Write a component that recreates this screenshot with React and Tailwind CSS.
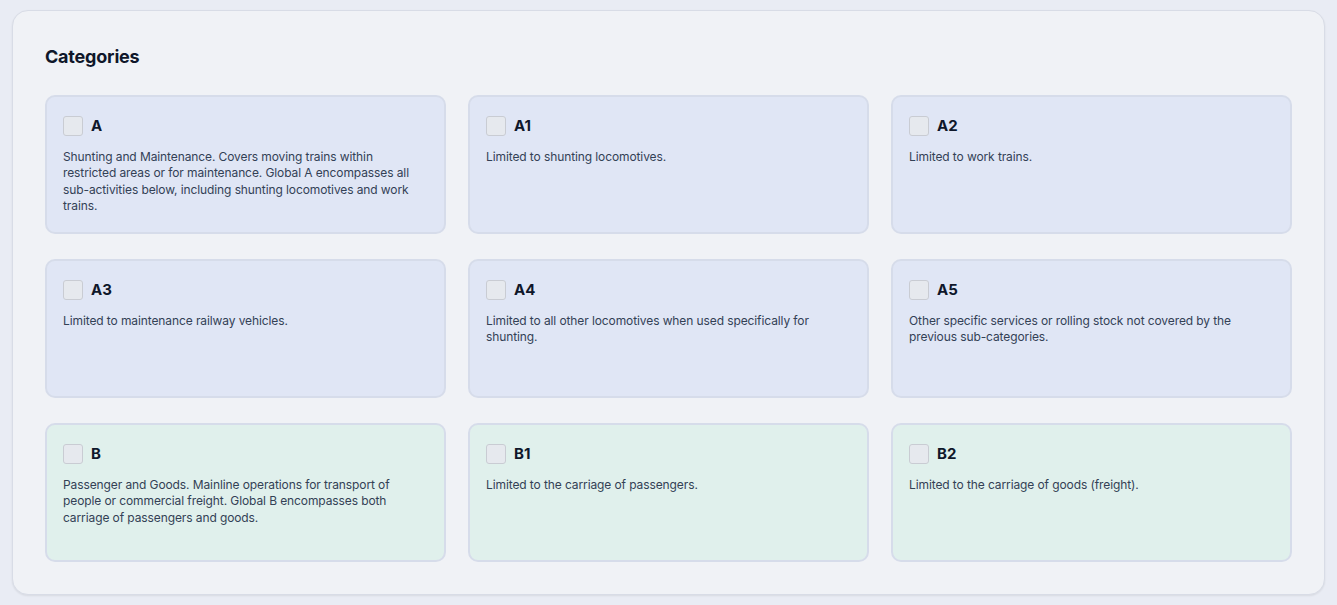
import React, { useState } from 'react';

const CATEGORIES = [
  {
    id: 'A',
    group: 'a',
    text: 'Shunting and Maintenance. Covers moving trains within restricted areas or for maintenance. Global A encompasses all sub-activities below, including shunting locomotives and work trains.',
  },
  { id: 'A1', group: 'a', text: 'Limited to shunting locomotives.' },
  { id: 'A2', group: 'a', text: 'Limited to work trains.' },
  { id: 'A3', group: 'a', text: 'Limited to maintenance railway vehicles.' },
  { id: 'A4', group: 'a', text: 'Limited to all other locomotives when used specifically for shunting.' },
  { id: 'A5', group: 'a', text: 'Other specific services or rolling stock not covered by the previous sub-categories.' },
  {
    id: 'B',
    group: 'b',
    text: 'Passenger and Goods. Mainline operations for transport of people or commercial freight. Global B encompasses both carriage of passengers and goods.',
  },
  { id: 'B1', group: 'b', text: 'Limited to the carriage of passengers.' },
  { id: 'B2', group: 'b', text: 'Limited to the carriage of goods (freight).' },
];

const CategoryCard = ({ cat, checked, onToggle }) => {
  const cardCls = `h-[139px] rounded-[10px] border-2 border-[#d6dcea] px-4 pt-[18px] ${
    cat.group === 'a' ? 'bg-[#e0e6f5]' : 'bg-[#e0f0ec]'
  }`;
  return (
    <label className={cardCls}>
      <div className="flex items-center gap-2">
        <input
          type="checkbox"
          checked={checked}
          onChange={onToggle}
          className="h-5 w-5 shrink-0 appearance-none rounded-[3px] border border-[#c9ccd3] bg-[#e6e9ee] checked:bg-[#3b82f6]"
        />
        <span className="text-[15px] font-bold text-[#0f172a]">{cat.id}</span>
      </div>
      <p className="mt-[11px] text-[12px] tracking-[-0.1px] leading-[16.6px] text-[#334155]">{cat.text}</p>
    </label>
  );
};

export default function App() {
  const [flags, setFlags] = useState({});
  const toggle = (id) => setFlags((prev) => ({ ...prev, [id]: !prev[id] }));

  return (
    <div
      className="min-h-[605px] bg-[#e9ecf4] px-3 pt-[10px] pb-[9px]"
      style={{ fontFamily: 'Inter, "Noto Sans", sans-serif' }}
    >
      <div className="rounded-2xl border border-[#d8dce6] bg-[#f0f2f6] px-8 pt-[34px] pb-8 shadow-[0_1px_2px_rgba(0,0,0,0.08)]">
        <h2 className="text-[18px] font-bold leading-6 tracking-[-0.2px] text-[#0f172a]">Categories</h2>
        <div className="mt-[26px] grid grid-cols-3 gap-x-[22px] gap-y-[25px]">
          {CATEGORIES.map((cat) => (
            <CategoryCard key={cat.id} cat={cat} checked={!!flags[cat.id]} onToggle={() => toggle(cat.id)} />
          ))}
        </div>
      </div>
    </div>
  );
}
